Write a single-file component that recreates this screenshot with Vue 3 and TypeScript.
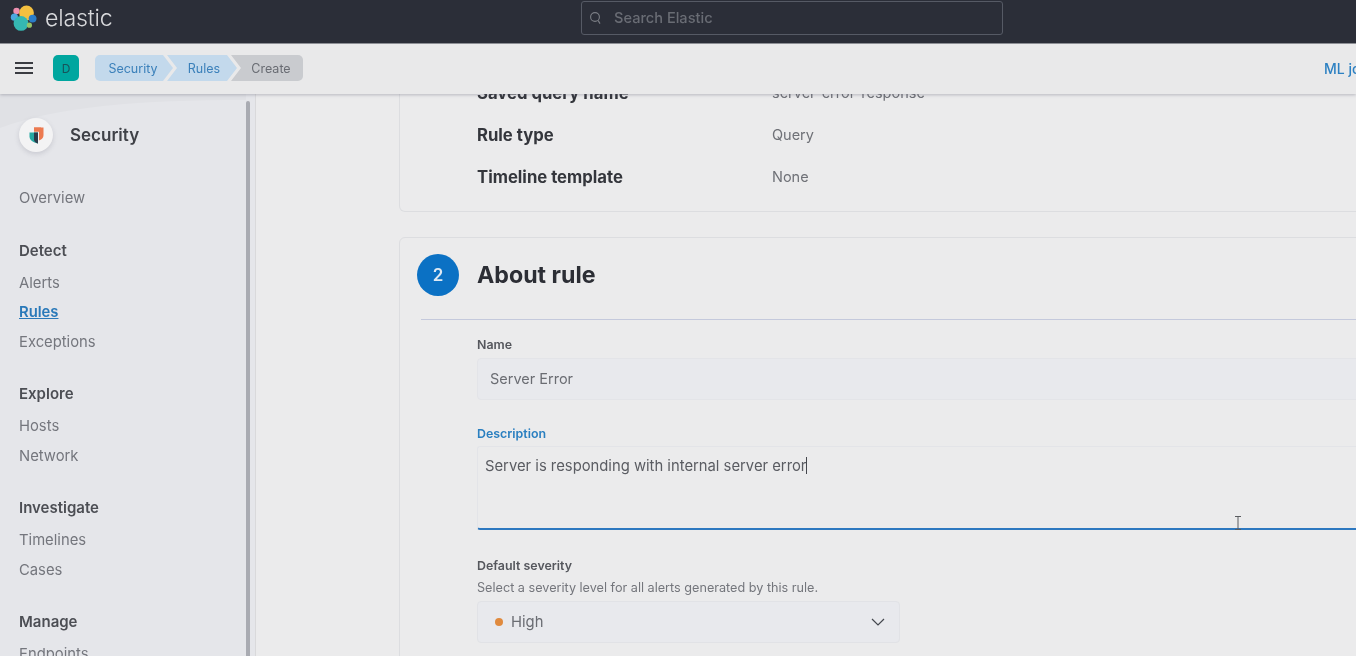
<template>
  <div class="page">
    <header class="topbar">
      <div class="brand">
        <svg class="logo" width="28" height="28" viewBox="0 0 28 28">
          <circle cx="6.5" cy="7" r="3.2" fill="#ee8fb0" />
          <circle cx="4.4" cy="13.2" r="3.6" fill="#4aa8e0" />
          <circle cx="16.5" cy="9" r="7.4" fill="#f4c040" />
          <circle cx="22.6" cy="14.6" r="3.9" fill="#2a7cc8" />
          <circle cx="11" cy="19.4" r="7.4" fill="#35b8b2" />
          <circle cx="19.4" cy="21.2" r="2.6" fill="#93c46a" />
        </svg>
        <span class="brandName">elastic</span>
      </div>
      <div class="globalSearch">
        <svg width="14" height="14" viewBox="0 0 14 14" fill="none" stroke="#7b7e85" stroke-width="1.1">
          <circle cx="6" cy="6" r="4.4" />
          <path d="M9.2 9.6 L11 12.6" />
        </svg>
        <span>Search Elastic</span>
      </div>
    </header>

    <div class="subbar">
      <div class="burger"><i></i><i></i><i></i></div>
      <div class="spaceTile">D</div>
      <nav class="crumbs">
        <span class="crumb first">Security</span>
        <span class="crumb middle">Rules</span>
        <span class="crumb last">Create</span>
      </nav>
      <a class="mlLink">ML job settings</a>
    </div>

    <div class="body">
      <aside class="sidebar">
        <svg class="sideCurve" width="246" height="60" viewBox="0 0 246 60">
          <path d="M0 0 H246 V6 C140 6 60 12 0 34 Z" fill="#e0e1e5" />
        </svg>
        <div class="sideInner">
          <div class="sideHead">
            <span class="sideLogo">
              <svg width="15" height="17" viewBox="0 0 15 17">
                <path d="M5 0.5 H14.5 V8 C14.5 10 13.5 11.5 12 12.5 V4.5 H5 Z" fill="#ec7a50" />
                <path d="M5 0.5 H12 V12.5 L10 13.5 V4.5 H5 Z" fill="#ec7a50" />
                <path d="M0.5 5.5 H9 V16.5 C4 15.5 0.5 13 0.5 9.5 Z" fill="#27a8a2" />
                <path d="M5 5.5 H9 V16.5 C6.8 16 5 14.5 5 12.5 Z" fill="#2d3a4a" />
              </svg>
            </span>
            <span class="sideTitle">Security</span>
          </div>
          <div class="navItem overview">Overview</div>
          <div v-for="group in navGroups" :key="group.title" class="navGroup">
            <div class="navTitle">{{ group.title }}</div>
            <div
              v-for="item in group.items"
              :key="item"
              class="navItem"
              :class="{ active: item === 'Rules' }"
            >
              {{ item }}
            </div>
          </div>
        </div>
        <div class="scrollThumb"></div>
      </aside>

      <main class="content">
        <section class="panel firstPanel">
          <div v-for="row in defineRows" :key="row.label" class="ruleRow">
            <span class="ruleLabel">{{ row.label }}</span>
            <span class="ruleValue">{{ row.value }}</span>
          </div>
        </section>

        <section class="panel aboutPanel">
          <div class="stepHead">
            <span class="stepNumber">2</span>
            <h2 class="stepTitle">About rule</h2>
          </div>
          <div class="divider"></div>
          <form class="aboutForm">
            <div class="fieldLabel">Name</div>
            <div class="textField">Server Error</div>

            <div class="fieldLabel descLabel">Description</div>
            <div class="textArea">
              Server is responding with internal server error<span class="caret"></span>
            </div>

            <div class="fieldLabel severityLabel">Default severity</div>
            <div class="helpText">Select a severity level for all alerts generated by this rule.</div>
            <div class="selectField">
              <span class="dot"></span>
              <span class="selectText">High</span>
              <svg class="chevron" width="14" height="8" viewBox="0 0 14 8" fill="none" stroke="#44474e" stroke-width="1.2">
                <path d="M1 1 L7 7 L13 1" />
              </svg>
            </div>
          </form>
        </section>

        <svg class="ibeam" width="8" height="14" viewBox="0 0 8 14" fill="none" stroke="#5a5c60" stroke-width="1">
          <path d="M1 .5 H7 M4 .5 V13.5 M1 13.5 H7" />
        </svg>
      </main>
    </div>
  </div>
</template>

<script setup lang="ts">
interface INavGroup {
  title: string;
  items: Array<string>;
}

interface IRuleRow {
  label: string;
  value: string;
}

const navGroups: Array<INavGroup> = [
  { title: "Detect", items: ["Alerts", "Rules", "Exceptions"] },
  { title: "Explore", items: ["Hosts", "Network"] },
  { title: "Investigate", items: ["Timelines", "Cases"] },
  { title: "Manage", items: ["Endpoints"] },
];

const defineRows: Array<IRuleRow> = [
  { label: "Saved query name", value: "server-error-response" },
  { label: "Rule type", value: "Query" },
  { label: "Timeline template", value: "None" },
];
</script>

<style>
html,
body {
  margin: 0;
  height: 100%;
  overflow: hidden;
}
</style>

<style scoped>
.page {
  width: 1356px;
  height: 656px;
  overflow: hidden;
  display: flex;
  flex-direction: column;
  background: #ebebec;
  font-family: Inter, "Liberation Sans", sans-serif;
  color: #34363c;
  filter: blur(0.4px);
}

.topbar {
  flex: 0 0 43px;
  display: flex;
  align-items: flex-start;
  background: #2b2e38;
  border-bottom: 1px solid #8d8f95;
  position: relative;
  z-index: 3;
}
.brand {
  width: 581px;
  display: flex;
  align-items: center;
  height: 36px;
  padding-left: 10px;
  box-sizing: border-box;
}
.logo {
  flex: none;
}
.brandName {
  margin-left: 7px;
  font-size: 23.2px;
  font-weight: 300;
  color: #d8d9dc;
  letter-spacing: -0.2px;
}
.globalSearch {
  width: 422px;
  height: 34px;
  margin-top: 1px;
  box-sizing: border-box;
  border: 1px solid #565a65;
  border-radius: 3px;
  display: flex;
  align-items: center;
  padding-left: 7px;
  gap: 11px;
  font-size: 14.6px;
  font-weight: 500;
  color: #696c74;
}

.subbar {
  flex: 0 0 50px;
  box-sizing: border-box;
  padding: 0 0 2px 15px;
  display: flex;
  align-items: center;
  background: #e9e9ea;
  box-shadow: 0 1px 3px rgba(90, 90, 110, 0.35);
  position: relative;
  z-index: 2;
  white-space: nowrap;
}
.burger {
  flex: none;
  width: 18px;
  display: flex;
  flex-direction: column;
  gap: 3px;
}
.burger i {
  display: block;
  height: 2px;
  background: #3a3c42;
}
.spaceTile {
  flex: none;
  width: 26px;
  height: 26px;
  margin-left: 20px;
  border-radius: 5px;
  background: #00a69f;
  color: #17535a;
  font-size: 12px;
  display: flex;
  align-items: center;
  justify-content: center;
}
.crumbs {
  flex: none;
  display: flex;
  height: 26px;
  margin-left: 16px;
  font-size: 12.5px;
}
.crumb {
  display: flex;
  align-items: center;
  justify-content: center;
  box-sizing: border-box;
}
.crumb.first {
  width: 78px;
  margin-right: -6px;
  padding-right: 2px;
  background: #c3d9ec;
  color: #3b80ba;
  border-radius: 5px 0 0 5px;
  clip-path: polygon(0 0, 68px 0, 78px 50%, 68px 100%, 0 100%);
}
.crumb.middle {
  width: 70px;
  margin-right: -6px;
  padding-left: 4px;
  background: #c3d9ec;
  color: #3b80ba;
  clip-path: polygon(0 0, 60px 0, 70px 50%, 60px 100%, 0 100%, 10px 50%);
}
.crumb.last {
  width: 72px;
  padding-left: 8px;
  background: #c9cbcf;
  color: #696c73;
  border-radius: 0 5px 5px 0;
  clip-path: polygon(0 0, 100% 0, 100% 100%, 0 100%, 10px 50%);
}
.mlLink {
  flex: none;
  margin-left: 1021px;
  font-size: 14px;
  font-weight: 500;
  color: #2c80c2;
}

.body {
  flex: 1;
  display: flex;
  min-height: 0;
}
.sidebar {
  flex: 0 0 255px;
  position: relative;
  overflow: hidden;
  background: #e5e6ea;
  border-right: 1px solid #d9d9db;
}
.sideCurve {
  position: absolute;
  top: 0;
  left: 0;
}
.sideInner {
  position: relative;
  padding: 24px 0 0 19px;
}
.sideHead {
  display: flex;
  align-items: center;
  height: 34px;
}
.sideLogo {
  width: 34px;
  height: 34px;
  border-radius: 50%;
  background: #f3f3f4;
  box-shadow: 0 2px 5px rgba(90, 90, 110, 0.2);
  display: flex;
  align-items: center;
  justify-content: center;
}
.sideTitle {
  margin-left: 17px;
  font-size: 17px;
  font-weight: 600;
  color: #3f4147;
}
.navItem {
  height: 29.5px;
  line-height: 29.5px;
  font-size: 14.8px;
  color: #74767d;
}
.navItem.overview {
  margin-top: 32px;
}
.navItem.active {
  color: #2a79b9;
  font-weight: 600;
  text-decoration: underline;
}
.navGroup {
  margin-top: 25px;
}
.navTitle {
  height: 24px;
  line-height: 24px;
  margin-bottom: 6px;
  font-size: 15px;
  font-weight: 600;
  color: #4c4e54;
}
.scrollThumb {
  position: absolute;
  top: 7px;
  bottom: 0;
  left: 245.5px;
  width: 4.5px;
  border-radius: 3px 3px 0 0;
  background: #a9abb2;
}

.content {
  flex: 1;
  min-width: 0;
  overflow: hidden;
  position: relative;
  padding-left: 143px;
}
.panel {
  width: 1100px;
  box-sizing: border-box;
  border: 1px solid #dcdde0;
  border-radius: 6px;
  padding-left: 77px;
}
.firstPanel {
  margin-top: -26px;
  padding-top: 4px;
  height: 144px;
  border-top: none;
}
.ruleRow {
  height: 42px;
  display: flex;
  align-items: center;
}
.ruleLabel {
  width: 295px;
  font-size: 16.7px;
  font-weight: 700;
  color: #34363c;
}
.ruleValue {
  margin-top: -1px;
  font-size: 14.5px;
  color: #6f7177;
}
.aboutPanel {
  margin-top: 25px;
  height: 480px;
  padding-left: 0;
}
.stepHead {
  display: flex;
  align-items: center;
  padding: 16px 0 0 17px;
}
.stepNumber {
  width: 42px;
  height: 42px;
  border-radius: 50%;
  background: #0b71c4;
  color: #dfe9f3;
  font-size: 17px;
  font-weight: 600;
  display: flex;
  align-items: center;
  justify-content: center;
}
.stepTitle {
  margin: 0 0 0 18px;
  font-size: 23.2px;
  font-weight: 700;
  color: #2c2e35;
}
.divider {
  height: 1px;
  margin: 23px 0 0 21px;
  background: #c4c9dc;
}
.aboutForm {
  padding: 17px 0 0 77px;
}
.fieldLabel {
  height: 16px;
  line-height: 16px;
  font-size: 12.4px;
  font-weight: 600;
  color: #55575d;
}
.textField {
  height: 42px;
  margin-top: 5px;
  box-sizing: border-box;
  padding: 0 0 2px 12px;
  border-radius: 4px;
  border: 1px solid #e3e4e8;
  background: #e8e9ed;
  display: flex;
  align-items: center;
  font-size: 14.5px;
  color: #6b6d73;
}
.descLabel {
  margin-top: 26px;
  color: #2a7fc0;
}
.textArea {
  height: 84px;
  margin-top: 4px;
  box-sizing: border-box;
  padding: 9px 0 0 7px;
  border-top: 1px solid #e3e4e8;
  border-left: 1px solid #e3e4e8;
  border-bottom: 2px solid #2d78c0;
  border-radius: 3px 0 0 3px;
  font-size: 14.8px;
  line-height: 20px;
  color: #5a5c62;
  white-space: nowrap;
}
.caret {
  display: inline-block;
  width: 1px;
  height: 17px;
  vertical-align: -3px;
  background: #44464c;
}
.severityLabel {
  margin-top: 28px;
}
.helpText {
  margin-top: 6px;
  height: 16px;
  line-height: 16px;
  font-size: 12.65px;
  color: #74767c;
}
.selectField {
  width: 423px;
  height: 42px;
  margin-top: 5px;
  box-sizing: border-box;
  padding: 0 14px 1px 17px;
  border-radius: 4px;
  border: 1px solid #e1e2e6;
  background: #e8e9ed;
  display: flex;
  align-items: center;
}
.dot {
  width: 8px;
  height: 8px;
  border-radius: 50%;
  background: #e08a3e;
}
.selectText {
  margin-left: 8px;
  font-size: 14.8px;
  color: #6b6d73;
}
.chevron {
  margin-left: auto;
}
.ibeam {
  position: absolute;
  top: 422px;
  left: 978px;
}
</style>
